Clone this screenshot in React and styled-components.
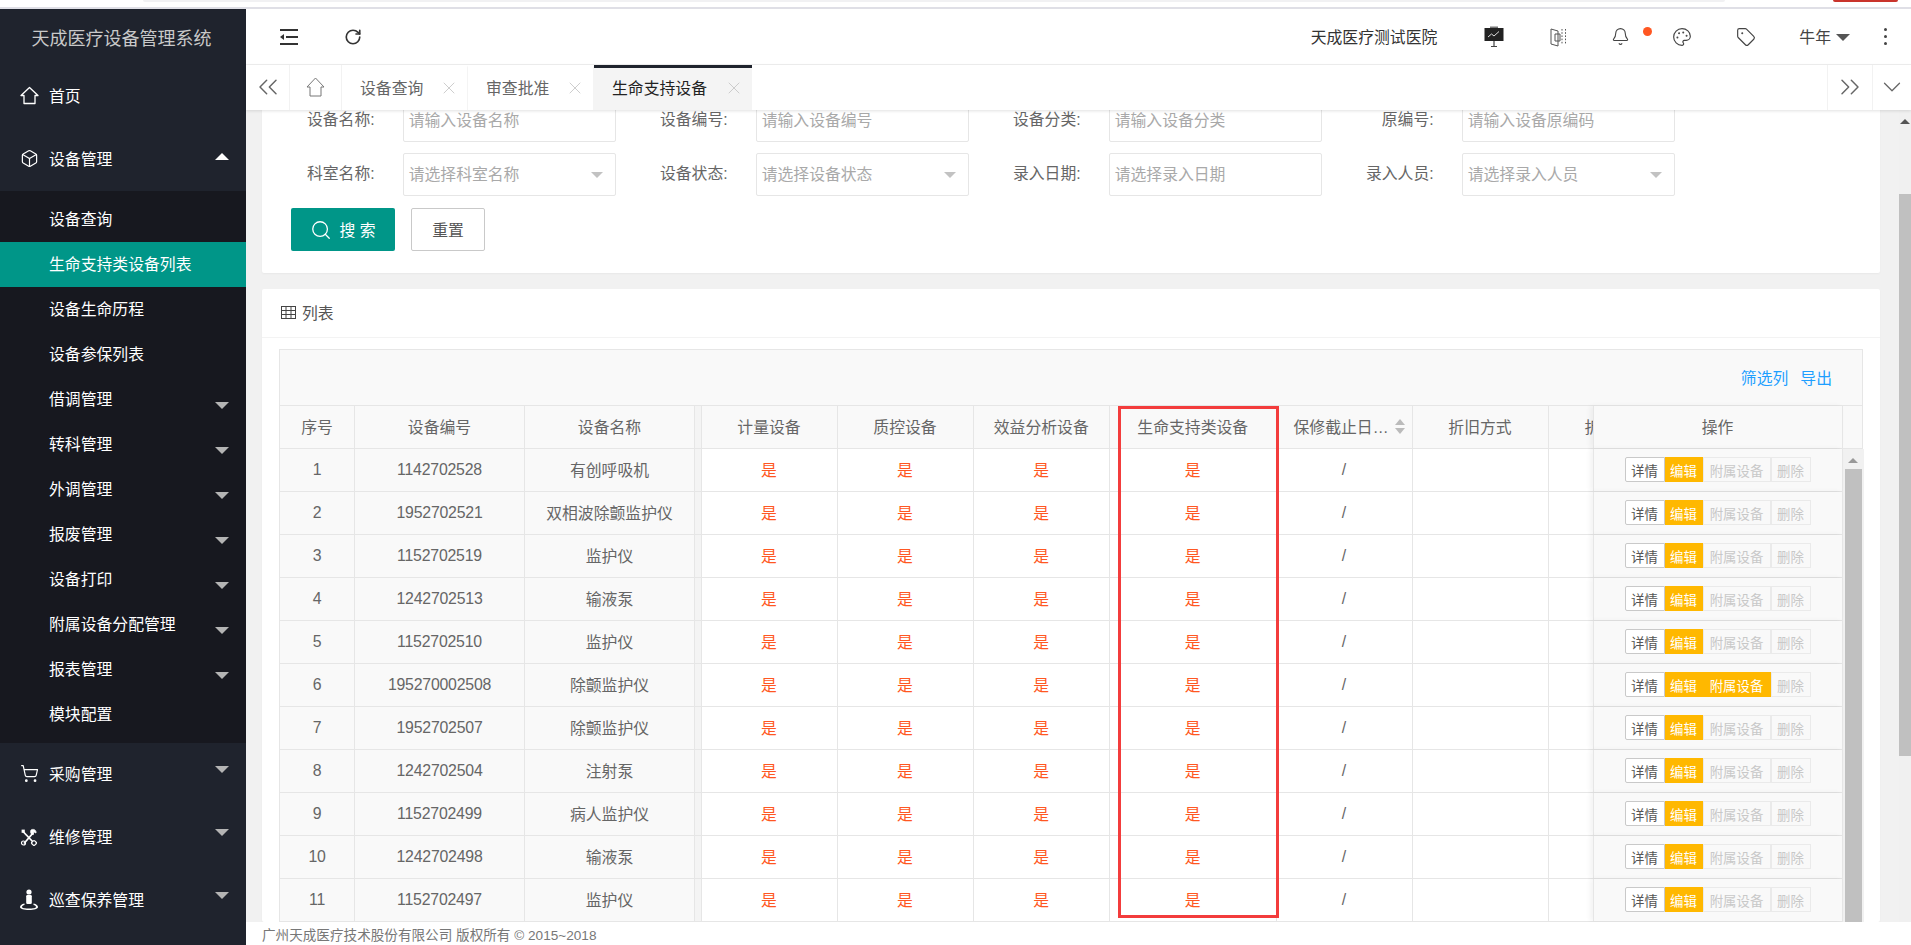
import React from "react";
import styled, { createGlobalStyle } from "styled-components";
import { Box, ShoppingCart, RotateCw, Bell, Palette, Tag, ChevronsLeft, ChevronsRight, ChevronDown, X, Search } from "lucide-react";

const Global = createGlobalStyle`
  html, body { margin: 0; padding: 0; height: 100%; overflow: hidden; background: #fff; }
  body { font-family: "Liberation Sans", "Noto Sans CJK SC", sans-serif; font-size: 15.84px; color: #666; }
  * { box-sizing: border-box; }
`;

const Page = styled.div`
  width: 1911px; height: 945px; display: flex; flex-direction: column; overflow: hidden;
`;
const BrowserEdge = styled.div`
  height: 9px; flex: none; position: relative; background: #fff; border-bottom: 2px solid #dfdfe6;
`;
const AddressBar = styled.div`
  position: absolute; left: 143px; width: 1582px; top: 0; height: 2px; background: #f1f1f3; border-radius: 0 0 6px 6px;
`;
const RedPill = styled.div`
  position: absolute; left: 1833px; width: 65px; top: 0; height: 2px; background: #c9342c; border-radius: 0 0 6px 6px;
`;
const Shell = styled.div`
  flex: 1; display: flex; min-height: 0;
`;

/* Sidebar */
const Sidebar = styled.aside`
  width: 246px; flex: none; background: #1f232d; display: flex; flex-direction: column;
`;
const Logo = styled.div`
  height: 56px; display: flex; align-items: center; justify-content: center; color: #c9c9c9; font-size: 18px;
  padding: 0 3px 1px 0;
`;
const MenuItem = styled.div`
  height: 63px; display: flex; align-items: center; color: #fff; position: relative; padding-left: 20px; padding-bottom: 2px;
`;
const MenuIcon = styled.span`
  width: 29px; display: flex; align-items: center; color: #fff;
`;
const Caret = styled.span`
  position: absolute; right: 17px; width: 0; height: 0; border-left: 7px solid transparent; border-right: 7px solid transparent;
  top: ${p => p.$top}px;
  ${p => p.$up ? "border-bottom: 7px solid #fff;" : "border-top: 7px solid #b4b4b4;"}
`;
const SubMenu = styled.div`
  background: #17181f; padding: 5.5px 0 6.5px;
`;
const SubItem = styled.div`
  height: 45px; display: flex; align-items: center; padding-left: 49px; padding-bottom: 2px; color: #fff; position: relative;
  background: ${p => p.$active ? "#009688" : "transparent"};
`;

/* Main */
const Main = styled.main`
  flex: 1; min-width: 0; display: flex; flex-direction: column; background: #f1f1f1;
`;
const TopBar = styled.header`
  height: 56px; flex: none; background: #fff; border-bottom: 1px solid #f0f0f0; display: flex; align-items: center; padding: 0 0 0 34px; color: #333;
`;
const TopLeft = styled.div`
  display: flex; align-items: center; gap: 46px; flex: 1; color: #333;
`;
const HospitalName = styled.span`
  color: #333; margin-right: 26px;
`;
const TopIcon = styled.span`
  width: ${p => p.$w || 62}px; display: flex; justify-content: center; align-items: center; position: relative; color: #444;
  margin-left: ${p => p.$ml || 0}px;
`;
const Dot = styled.i`
  position: absolute; left: 54px; top: 0; width: 9px; height: 9px; border-radius: 50%; background: #ff5722;
`;
const UserName = styled.span`
  display: flex; align-items: center; gap: 5px; color: #444; margin-left: 22px;
`;
const UserCaret = styled.i`
  width: 0; height: 0; border-left: 7px solid transparent; border-right: 7px solid transparent; border-top: 7px solid #555; margin-top: 2px;
`;
const MoreDots = styled.span`
  display: flex; flex-direction: column; gap: 4px; margin-left: 34px; margin-right: 24px;
`;
const MoreDot = styled.i`
  width: 3px; height: 3px; border-radius: 50%; background: #444;
`;

const TabBar = styled.nav`
  height: 45px; flex: none; background: #fff; display: flex; position: relative; z-index: 2; box-shadow: 0 1px 3px rgba(0,0,0,.12);
`;
const NavCell = styled.div`
  width: ${p => p.$w}px; flex: none; display: flex; align-items: center; justify-content: center; color: #666; padding-bottom: 2px;
  ${p => p.$left ? "border-left: 1px solid #f2f2f2;" : "border-right: 1px solid #f2f2f2;"}
`;
const Tab = styled.div`
  width: ${p => p.$w}px; flex: none; display: flex; align-items: center; padding-left: 18px; position: relative;
  color: ${p => p.$active ? "#222" : "#666"};
  background: ${p => p.$active ? "#f4f4f4" : "#fff"};
  border-right: ${p => p.$active ? "0" : "1px solid #f4f4f4"};
  border-top: 3px solid ${p => p.$active ? "#1f232d" : "transparent"};
  padding-bottom: 3px;
`;
const TabClose = styled.span`
  position: absolute; right: ${p => p.$right}px; display: flex; color: #c4c4c4;
`;
const TabSpacer = styled.div`
  flex: 1;
`;

const Content = styled.div`
  flex: 1; min-height: 0; display: flex; overflow: hidden;
`;
const Scroller = styled.div`
  flex: 1; min-width: 0; padding: 0 19px 0 16px; overflow: hidden;
`;
const Stack = styled.div`
  margin-top: -11px; display: flex; flex-direction: column; gap: 16px;
`;
const PageBar = styled.div`
  width: 12px; flex: none; background: #f0f0f0; display: flex; flex-direction: column; align-items: center;
`;
const ArrowUp = styled.i`
  width: 0; height: 0; border-left: 5px solid transparent; border-right: 5px solid transparent;
  border-bottom: 5px solid ${p => p.$c}; margin-top: ${p => p.$mt}px;
`;
const PageThumb = styled.div`
  width: 12px; height: 562px; background: #c0c0c0; margin-top: 70px;
`;

const Card = styled.section`
  background: #fff; border-radius: 2px; box-shadow: 0 1px 2px rgba(0,0,0,.04);
`;
const FormCard = styled(Card)`
  height: 174px; display: flex; flex-direction: column;
`;
const FormGrid = styled.div`
  display: grid; grid-template-columns: repeat(4, 353px); row-gap: 11px; padding-left: 1px;
`;
const Field = styled.div`
  display: flex; align-items: center;
`;
const Label = styled.label`
  width: 112px; margin-right: 28px; text-align: right; color: #666; padding-bottom: 4px;
`;
const Input = styled.div`
  width: 214px; height: 43px; border: 1px solid #e6e6e6; border-radius: 2px; display: flex; align-items: center;
  padding: 0 12px 3px 5px; color: #a9a9a9; background: #fff; position: relative; justify-content: space-between;
`;
const SelectCaret = styled.i`
  width: 0; height: 0; border-left: 6px solid transparent; border-right: 6px solid transparent; border-top: 6px solid #c2c2c2; margin-top: 4px;
`;
const FormActions = styled.div`
  display: flex; gap: 16px; padding: 12px 0 0 29px;
`;
const SearchButton = styled.button`
  width: 104px; height: 43px; border: 0; border-radius: 2px; background: #009688; color: #fff; font: inherit; display: flex; align-items: center; justify-content: center; gap: 7px;
  white-space: pre;
`;
const ResetButton = styled.button`
  width: 74px; height: 43px; border: 1px solid #c9c9c9; border-radius: 2px; background: #fff; color: #555; font: inherit;
`;

const ListHead = styled.div`
  height: 49px; border-bottom: 1px solid #f3f3f3; display: flex; align-items: center; gap: 6px; padding-left: 19px; color: #555; padding-bottom: 2px;
`;
const ListBody = styled.div`
  padding: 11px 17px 0 17px;
`;
const Table = styled.div`
  position: relative; border: 1px solid #e6e6e6; border-bottom: 0; width: 1584px; background: #fff;
`;
const Toolbar = styled.div`
  height: 56px; background: #f9f9f9; border-bottom: 1px solid #e6e6e6; display: flex; align-items: center; justify-content: flex-end; gap: 12px; padding: 0 30px 0 0;
`;
const ToolLink = styled.a`
  color: #1e9fff;
`;
const HeadRow = styled.div`
  display: flex; height: 43px; background: #f9f9f9; border-bottom: 1px solid #e6e6e6;
`;
const BodyWrap = styled.div`
  display: flex;
`;
const Rows = styled.div`
  flex: none;
`;
const Row = styled.div`
  display: flex; height: 43px; background: #fff; border-bottom: 1px solid #e6e6e6;
`;
const Cell = styled.div`
  width: ${p => p.$w}px; flex: none; display: flex; align-items: center; justify-content: center; border-right: 1px solid #e6e6e6;
  white-space: nowrap; overflow: hidden; color: #666;
  background: ${p => p.$frozen ? "#f9f9f9" : "transparent"};
  padding-bottom: 1px;
`;
const Digits = styled.span`
  letter-spacing: -0.2px;
`;
const Yes = styled.span`
  color: #ff5722;
`;
const Gap = styled.div`
  width: 6.5px; flex: none; background: #f4f4f4; border-right: 1px solid #e6e6e6;
`;
const SortCell = styled(Cell)`
  justify-content: flex-start; padding-left: 17px; gap: 7px; position: relative;
`;
const Sort = styled.span`
  display: flex; flex-direction: column; gap: 3px;
`;
const SortUp = styled.i`
  width: 0; height: 0; border-left: 5px solid transparent; border-right: 5px solid transparent; border-bottom: 6px solid #bbb;
`;
const SortDown = styled.i`
  width: 0; height: 0; border-left: 5px solid transparent; border-right: 5px solid transparent; border-top: 6px solid #bbb;
`;
const ClipCell = styled(Cell)`
  justify-content: flex-start; padding-left: 36px; border-right: 0;
`;
const OpsCell = styled(Cell)`
  background: #f9f9f9; box-shadow: -3px 0 5px rgba(0,0,0,.05); position: relative; border-left: 1px solid #e6e6e6; overflow: visible;
`;
const OpGroup = styled.div`
  display: flex; height: 25px;
`;
const Op = styled.span`
  display: flex; align-items: center; justify-content: center; font-size: 13.4px; height: 25px; width: ${p => p.$w}px;
  ${p => p.$kind === "plain" && "background:#fff;color:#555;border:1px solid #c9c9c9;border-radius:2px 0 0 2px;"}
  ${p => p.$kind === "warn" && "background:#ffb800;color:#fff;"}
  ${p => p.$kind === "off" && "background:#f9f9f9;color:#c8c8c8;border:1px solid #eaeaea;"}
`;
const GutterHead = styled.div`
  flex: 1; background: #f9f9f9;
`;
const Gutter = styled.div`
  width: 21px; flex: none; background: #f1f1f1; display: flex; flex-direction: column; align-items: center;
`;
const GutterThumb = styled.div`
  width: 17px; flex: 1; background: #c0c0c0; margin-top: 6px;
`;
const Highlight = styled.div`
  position: absolute; left: 838px; top: 56px; width: 161px; height: 512px; border: 3px solid #f33c3c; pointer-events: none;
`;
const Footer = styled.footer`
  height: 23px; flex: none; background: #fff; display: flex; align-items: center; padding: 1px 0 0 16px; color: #777; font-size: 13.6px;
`;

/* Drawn icons */
const HomeIcon = () => (
  <svg width="19" height="19" viewBox="0 0 19 19" fill="none" stroke="currentColor" strokeWidth="1.3">
    <path d="M9.5 1.5 L18 9.5 H15 V17.5 H4 V9.5 H1 Z" strokeLinejoin="round" />
  </svg>
);
const ToolsIcon = () => (
  <svg width="18" height="18" viewBox="0 0 18 18" fill="none" stroke="currentColor" strokeWidth="1.8">
    <path d="M4 15.5 L13 5" />
    <path d="M11 2 C13 0.6 16.5 1.6 16 5 L13.6 3.8 L13.4 6.6 C11 7 10 4 11 2Z" fill="currentColor" strokeWidth="0.8" />
    <circle cx="3.5" cy="15" r="2" strokeWidth="1.2" />
    <path d="M3 3.5 L14 15" />
    <rect x="1.6" y="1.6" width="3.2" height="3.2" fill="currentColor" strokeWidth="0" />
    <rect x="12" y="13" width="4" height="4" rx="1" fill="#1f232d" strokeWidth="1.2" transform="rotate(45 14 15)" />
  </svg>
);
const InspectIcon = () => (
  <svg width="18" height="22" viewBox="0 0 18 22" fill="currentColor">
    <circle cx="9" cy="3" r="2.6" />
    <rect x="6.2" y="6" width="5.6" height="9" rx="1.2" />
    <path d="M4.5 14.5 C1.5 15.2 0 16.4 0 18 C0 20 4 21 9 21 C14 21 18 20 18 18 C18 16.4 16.5 15.2 13.5 14.5 V16 C15 16.4 16 17.1 16 18 C16 19 13 19.6 9 19.6 C5 19.6 2 19 2 18 C2 17.1 3 16.4 4.5 16 Z" />
  </svg>
);
const CollapseIcon = () => (
  <svg width="18" height="16" viewBox="0 0 18 16" fill="#333">
    <rect x="0" y="0" width="18" height="2" />
    <rect x="6" y="7" width="12" height="2" />
    <rect x="0" y="14" width="18" height="2" />
    <path d="M0 8 L4 5 V11 Z" />
  </svg>
);
const BoardIcon = () => (
  <svg width="20" height="21" viewBox="0 0 20 21">
    <rect x="6" y="0.5" width="8" height="2" fill="#777" />
    <rect x="0.5" y="2" width="19" height="13" fill="#222" />
    <path d="M4 11 L7.5 8 L10 10 L15 5.5" stroke="#ddd" strokeWidth="1" fill="none" />
    <path d="M10 15 V20 M7 20.5 H13" stroke="#444" strokeWidth="1.2" />
  </svg>
);
const BookIcon = () => (
  <svg width="17" height="20" viewBox="0 0 17 20" fill="none" stroke="#555" strokeWidth="1">
    <path d="M1 2 L8 4 V19 L1 17 Z" />
    <path d="M5 7 H10 V14 H5 Z" />
    <path d="M12 2 V18 M15.5 2 V18" strokeDasharray="1.6 1.6" />
  </svg>
);
const GridIcon = () => (
  <svg width="15" height="13" viewBox="0 0 15 13" fill="none" stroke="#444" strokeWidth="1">
    <rect x="0.5" y="0.5" width="14" height="12" />
    <path d="M0.5 4.5 H14.5 M0.5 8.5 H14.5 M5 0.5 V12.5 M10 0.5 V12.5" />
  </svg>
);
const HomeTab = () => (
  <svg width="19" height="20" viewBox="0 0 19 20" fill="none" stroke="#777" strokeWidth="1">
    <path d="M9.5 1 L18 10 H15 V19 H4 V10 H1 Z" strokeLinejoin="round" />
  </svg>
);

const rows = [
  [1, "1142702528", "有创呼吸机"],
  [2, "1952702521", "双相波除颤监护仪"],
  [3, "1152702519", "监护仪"],
  [4, "1242702513", "输液泵"],
  [5, "1152702510", "监护仪"],
  [6, "195270002508", "除颤监护仪", true],
  [7, "1952702507", "除颤监护仪"],
  [8, "1242702504", "注射泵"],
  [9, "1152702499", "病人监护仪"],
  [10, "1242702498", "输液泵"],
  [11, "1152702497", "监护仪"],
];

const subs = [
  ["设备查询"], ["生命支持类设备列表", false, true], ["设备生命历程"], ["设备参保列表"],
  ["借调管理", true], ["转科管理", true], ["外调管理", true], ["报废管理", true], ["设备打印", true],
  ["附属设备分配管理", true], ["报表管理", true], ["模块配置"],
];

const fields = [
  ["设备名称:", "请输入设备名称"], ["设备编号:", "请输入设备编号"], ["设备分类:", "请输入设备分类"], ["原编号:", "请输入设备原编码"],
  ["科室名称:", "请选择科室名称", true], ["设备状态:", "请选择设备状态", true], ["录入日期:", "请选择录入日期"], ["录入人员:", "请选择录入人员", true],
];

export default function App() {
  return (
    <Page>
      <Global />
      <BrowserEdge>
        <AddressBar />
        <RedPill />
      </BrowserEdge>
      <Shell>
        <Sidebar>
          <Logo>天成医疗设备管理系统</Logo>
          <MenuItem><MenuIcon><HomeIcon /></MenuIcon>首页</MenuItem>
          <MenuItem><MenuIcon><Box size={19} strokeWidth={1.5} /></MenuIcon>设备管理<Caret $up $top={25} /></MenuItem>
          <SubMenu>
            {subs.map(([t, caret, active]) => (
              <SubItem key={t} $active={active}>{t}{caret && <Caret $top={25} />}</SubItem>
            ))}
          </SubMenu>
          <MenuItem><MenuIcon><ShoppingCart size={19} strokeWidth={1.5} /></MenuIcon>采购管理<Caret $top={23} /></MenuItem>
          <MenuItem><MenuIcon><ToolsIcon /></MenuIcon>维修管理<Caret $top={23} /></MenuItem>
          <MenuItem><MenuIcon><InspectIcon /></MenuIcon>巡查保养管理<Caret $top={23} /></MenuItem>
        </Sidebar>
        <Main>
          <TopBar>
            <TopLeft>
              <CollapseIcon />
              <RotateCw size={18} strokeWidth={2.2} color="#333" />
            </TopLeft>
            <HospitalName>天成医疗测试医院</HospitalName>
            <TopIcon><BoardIcon /></TopIcon>
            <TopIcon $ml={2}><BookIcon /></TopIcon>
            <TopIcon><Bell size={19} strokeWidth={1.4} /><Dot /></TopIcon>
            <TopIcon><Palette size={20} strokeWidth={1.4} /></TopIcon>
            <TopIcon $ml={2}><Tag size={20} strokeWidth={1.4} /></TopIcon>
            <UserName>牛年<UserCaret /></UserName>
            <MoreDots><MoreDot /><MoreDot /><MoreDot /></MoreDots>
          </TopBar>
          <TabBar>
            <NavCell $w={44}><ChevronsLeft size={32} strokeWidth={1.1} /></NavCell>
            <NavCell $w={52}><HomeTab /></NavCell>
            <Tab $w={126}>设备查询<TabClose $right={8}><X size={20} strokeWidth={1} /></TabClose></Tab>
            <Tab $w={126}>审查批准<TabClose $right={8}><X size={20} strokeWidth={1} /></TabClose></Tab>
            <Tab $w={158} $active>生命支持设备<TabClose $right={8}><X size={20} strokeWidth={1} /></TabClose></Tab>
            <TabSpacer />
            <NavCell $w={45} $left><ChevronsRight size={32} strokeWidth={1.1} /></NavCell>
            <NavCell $w={39} $left><ChevronDown size={30} strokeWidth={1} /></NavCell>
          </TabBar>
          <Content>
            <Scroller>
              <Stack>
                <FormCard>
                  <FormGrid>
                    {fields.map(([l, ph, sel]) => (
                      <Field key={l}>
                        <Label>{l}</Label>
                        <Input>{ph}{sel && <SelectCaret />}</Input>
                      </Field>
                    ))}
                  </FormGrid>
                  <FormActions>
                    <SearchButton><Search size={22} strokeWidth={1.4} />搜 索</SearchButton>
                    <ResetButton>重置</ResetButton>
                  </FormActions>
                </FormCard>
                <Card>
                  <ListHead><GridIcon />列表</ListHead>
                  <ListBody>
                    <Table>
                      <Toolbar><ToolLink>筛选列</ToolLink><ToolLink>导出</ToolLink></Toolbar>
                      <HeadRow>
                        <Cell $w={75}>序号</Cell>
                        <Cell $w={170}>设备编号</Cell>
                        <Cell $w={170}>设备名称</Cell>
                        <Gap />
                        <Cell $w={136}>计量设备</Cell>
                        <Cell $w={136}>质控设备</Cell>
                        <Cell $w={136.5}>效益分析设备</Cell>
                        <Cell $w={166.5}>生命支持类设备</Cell>
                        <SortCell $w={136}>保修截止日…<Sort><SortUp /><SortDown /></Sort></SortCell>
                        <Cell $w={136}>折旧方式</Cell>
                        <ClipCell $w={44}>折旧年限</ClipCell>
                        <OpsCell $w={250}>操作</OpsCell>
                        <GutterHead />
                      </HeadRow>
                      <BodyWrap>
                        <Rows>
                          {rows.map(([n, code, name, linked]) => (
                            <Row key={n}>
                              <Cell $w={75} $frozen><Digits>{n}</Digits></Cell>
                              <Cell $w={170} $frozen><Digits>{code}</Digits></Cell>
                              <Cell $w={170} $frozen>{name}</Cell>
                              <Gap />
                              <Cell $w={136}><Yes>是</Yes></Cell>
                              <Cell $w={136}><Yes>是</Yes></Cell>
                              <Cell $w={136.5}><Yes>是</Yes></Cell>
                              <Cell $w={166.5}><Yes>是</Yes></Cell>
                              <Cell $w={136}>/</Cell>
                              <Cell $w={136} />
                              <ClipCell $w={44} />
                              <OpsCell $w={250}>
                                <OpGroup>
                                  <Op $kind="plain" $w={40}>详情</Op>
                                  <Op $kind="warn" $w={38}>编辑</Op>
                                  <Op $kind={linked ? "warn" : "off"} $w={68}>附属设备</Op>
                                  <Op $kind="off" $w={40}>删除</Op>
                                </OpGroup>
                              </OpsCell>
                            </Row>
                          ))}
                        </Rows>
                        <Gutter>
                          <ArrowUp $c="#999" $mt={9} />
                          <GutterThumb />
                        </Gutter>
                      </BodyWrap>
                      <Highlight />
                    </Table>
                  </ListBody>
                </Card>
              </Stack>
            </Scroller>
            <PageBar>
              <ArrowUp $c="#555" $mt={9} />
              <PageThumb />
            </PageBar>
          </Content>
          <Footer>广州天成医疗技术股份有限公司 版权所有 © 2015~2018</Footer>
        </Main>
      </Shell>
    </Page>
  );
}
